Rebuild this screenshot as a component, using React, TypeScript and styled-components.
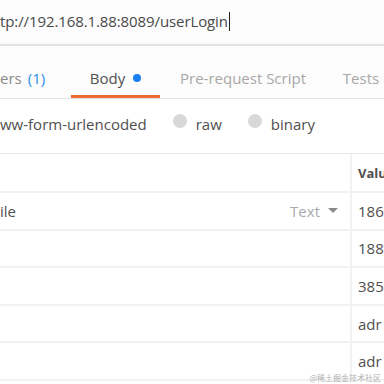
import React from 'react';
import styled, {createGlobalStyle} from 'styled-components';

const GlobalStyle = createGlobalStyle`
    html, body {
        margin: 0;
        padding: 0;
        background: #ffffff;
    }
    body {
        width: 384px;
        height: 384px;
        overflow: hidden;
        font-family: "Open Sans", "Noto Sans", sans-serif;
        color: #505050;
    }
`;

const tabs = [
    {label: "ers", count: "(1)", width: 71},
    {label: "Body", dot: true, active: true, width: 89},
    {label: "Pre-request Script", faded: true, width: 166},
    {label: "Tests", faded: true, width: 70},
];

const rows = [
    {key: "ile", type: "Text", value: "186"},
    {key: "", value: "188"},
    {key: "", value: "385"},
    {key: "", value: "adr"},
    {key: "", value: "adr"},
];

const App: React.FC = () => {
    return (
        <Page>
            <GlobalStyle/>
            <UrlBar>
                <UrlText>tp://192.168.1.88:8089/userLogin</UrlText>
                <Caret/>
            </UrlBar>
            <TabBar>
                {tabs.map((tab) =>
                    <Tab key={tab.label} w={tab.width} active={`${!!tab.active}`} faded={`${!!tab.faded}`}>
                        {tab.label}
                        {tab.count && <Count>{tab.count}</Count>}
                        {tab.dot && <Dot/>}
                    </Tab>
                )}
            </TabBar>
            <RadioRow>
                <RadioLabel>ww-form-urlencoded</RadioLabel>
                <RadioItem><Radio/>raw</RadioItem>
                <RadioItem><Radio/>binary</RadioItem>
            </RadioRow>
            <Table>
                <KeyCell/>
                <ValueCell><HeaderText>Value</HeaderText></ValueCell>
                {rows.map((row, index) =>
                    <React.Fragment key={index}>
                        <KeyCell>
                            <span>{row.key}</span>
                            {row.type && <TypeSelect>{row.type}<Arrow/></TypeSelect>}
                        </KeyCell>
                        <ValueCell>{row.value}</ValueCell>
                    </React.Fragment>
                )}
            </Table>
            <Watermark>@稀土掘金技术社区</Watermark>
        </Page>
    );
};

const Page = styled.div`
    position: relative;
    width: 384px;
    height: 384px;
    overflow: hidden;
`;
const UrlBar = styled.div`
    height: 46px;
    display: flex;
    align-items: center;
    padding-bottom: 2px;
    box-sizing: border-box;
    border-bottom: 2px solid #e3e3e3;
    background: #fcfcfc;
    font-size: 15px;
    letter-spacing: -0.1px;
    color: #4a4a4a;
`;
const UrlText = styled.span`
    white-space: nowrap;
`;
const Caret = styled.span`
    width: 1px;
    height: 19px;
    margin-left: 1px;
    background: #222;
`;
const TabBar = styled.div`
    height: 53px;
    display: flex;
    align-items: stretch;
    border-bottom: 1px solid #e3e3e3;
    box-sizing: border-box;
    background: #fcfcfc;
`;
const Tab = styled.div<{ w: number; active: "true" | "false"; faded: "true" | "false" }>`
    flex: 0 0 ${(p) => p.w}px;
    display: flex;
    align-items: center;
    justify-content: center;
    gap: 6px;
    padding-top: 14px;
    box-sizing: border-box;
    font-size: 15px;
    white-space: nowrap;
    color: ${(p) => p.active === "true" ? "#505050" : p.faded === "true" ? "#a8a8a8" : "#8a8a8a"};
    border-bottom: 3px solid ${(p) => p.active === "true" ? "#ef6c2f" : "transparent"};
    &:first-child {
        justify-content: flex-start;
    }
`;
const Count = styled.span`
    color: #2d8de8;
`;
const Dot = styled.span`
    width: 8px;
    height: 8px;
    border-radius: 50%;
    background: #1a7ff0;
    margin-left: 2px;
`;
const RadioRow = styled.div`
    height: 55px;
    display: flex;
    align-items: center;
    padding-bottom: 5px;
    box-sizing: border-box;
    font-size: 15px;
    color: #505050;
    border-bottom: 1px solid #e6e6e6;
`;
const RadioLabel = styled.span`
    white-space: nowrap;
    margin-right: 26px;
`;
const RadioItem = styled.span`
    display: flex;
    align-items: center;
    gap: 9px;
    margin-right: 26px;
    white-space: nowrap;
`;
const Radio = styled.span`
    width: 14px;
    height: 14px;
    border-radius: 50%;
    background: #d8d8d8;
    margin-top: -6px;
`;
const Table = styled.div`
    display: grid;
    grid-template-columns: 352px 1fr;
    grid-template-rows: 39px;
    grid-auto-rows: 37.6px;
`;
const KeyCell = styled.div`
    display: flex;
    align-items: center;
    justify-content: space-between;
    padding-right: 12px;
    border-right: 2px solid #f2f2f2;
    border-bottom: 2px solid #f2f2f2;
    font-size: 15px;
    color: #505050;
`;
const ValueCell = styled.div`
    display: flex;
    align-items: center;
    padding-left: 6px;
    border-bottom: 2px solid #f2f2f2;
    font-size: 15px;
    color: #505050;
    white-space: nowrap;
`;
const HeaderText = styled.span`
    font-weight: 700;
    font-size: 13px;
    color: #505050;
`;
const TypeSelect = styled.span`
    display: flex;
    align-items: center;
    gap: 8px;
    color: #ababab;
`;
const Arrow = styled.span`
    width: 0;
    height: 0;
    border-left: 5px solid transparent;
    border-right: 5px solid transparent;
    border-top: 5px solid #8a8a8a;
`;
const Watermark = styled.span`
    position: absolute;
    right: 3px;
    bottom: 1px;
    font-family: "Noto Sans CJK SC", sans-serif;
    font-size: 8px;
    color: #b0b0b0;
`;

export default App;
